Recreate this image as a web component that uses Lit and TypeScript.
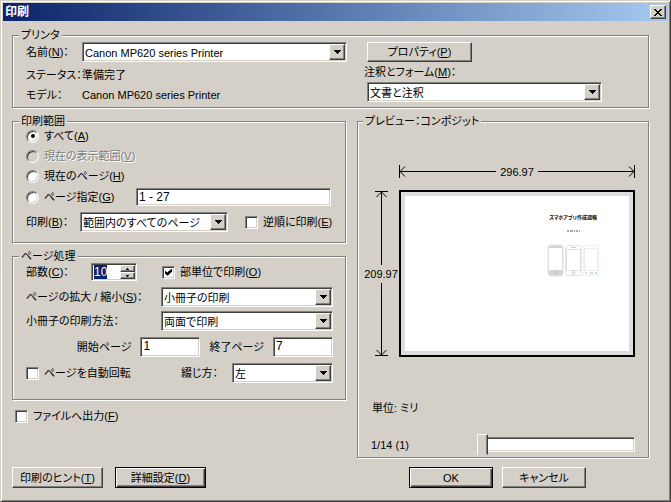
import { LitElement, html, css, svg } from "lit";
import { customElement, property, query } from "lit/decorators.js";

const base = css`
  * { box-sizing: border-box; }
  .sunken {
    background: #fff;
    border: 1px solid;
    border-color: #808080 #fff #fff #808080;
    box-shadow: inset 1px 1px #404040, inset -1px -1px #d4d0c8;
  }
  .raised {
    background: #d4d0c8;
    border: 1px solid;
    border-color: #fff #404040 #404040 #fff;
    box-shadow: inset -1px -1px #808080;
  }
  input, select, button {
    font: inherit;
    font-feature-settings: inherit;
    color: #000;
    margin: 0;
    border-radius: 0;
    outline: none;
  }
`;

@customElement("combo-box")
class ComboBox extends LitElement {
  @property() value = "";
  @property() name = "";

  static styles = [base, css`
    :host { display: grid; height: 20px; min-width: 0; }
    select, .arrow { grid-area: 1 / 1; }
    select { appearance: none; width: 100%; min-width: 0; height: 20px; padding: 1px 18px 0 2px; }
    .arrow {
      justify-self: end;
      align-self: center;
      display: grid;
      place-items: center;
      width: 16px;
      height: 16px;
      margin-right: 2px;
      pointer-events: none;
    }
    svg { display: block; }
  `];

  render() {
    return html`
      <select class="sunken" aria-label=${this.name}><option>${this.value}</option></select>
      <span class="arrow raised">
        <svg width="7" height="4" shape-rendering="crispEdges"><path d="M0 0h7v1h-1v1h-1v1h-1v1h-1v-1h-1v-1h-1v-1h-1z" /></svg>
      </span>`;
  }
}

const chevrons = {
  left: svg`<path d="M0.5 0v13M1 6.5h8M1 6.5l5-5M1 6.5l5 5" />`,
  right: svg`<path d="M8.5 0v13M0 6.5h8M8 6.5l-5-5M8 6.5l-5 5" />`,
  up: svg`<path d="M0 0.5h13M6.5 1v8M6.5 1l-5 5M6.5 1l5 5" />`,
  down: svg`<path d="M0 8.5h13M6.5 0v8M6.5 8l-5-5M6.5 8l5-5" />`,
};

@customElement("app-root")
class AppRoot extends LitElement {
  @query(".copies") copies!: HTMLInputElement;

  static styles = [base, css`
    :host {
      display: block;
      font: 11px/14px "Liberation Sans", "Noto Sans CJK JP", sans-serif;
      font-feature-settings: "palt";
      color: #000;
      white-space: nowrap;
    }
    .window {
      min-height: 100vh;
      background: #d4d0c8;
      border: 1px solid;
      border-color: #d4d0c8 #404040 #404040 #d4d0c8;
      box-shadow: inset 1px 1px #fff, inset -1px -1px #808080;
      padding: 2px;
    }
    .title {
      display: flex;
      align-items: center;
      justify-content: space-between;
      height: 18px;
      padding: 0 2px;
      background: linear-gradient(90deg, #0a246a, #a6caf0);
      color: #fff;
      font-size: 12px;
      font-weight: bold;
    }
    .title h1 { margin: 0; font: inherit; }
    .close { display: grid; place-items: center; width: 16px; height: 14px; padding: 0; }
    .body { display: flex; flex-direction: column; padding: 7px 19px 10px 9px; gap: 6px; }
    fieldset {
      min-width: 0;
      margin: 0;
      padding: 0 12px 5px 13px;
      border: 1px solid #808080;
      box-shadow: 1px 1px #fff, inset 1px 1px #fff;
    }
    legend { height: 14px; margin-left: -7px; padding: 0 2px; background: #d4d0c8; }
    .columns { display: grid; grid-template-columns: minmax(0, 334fr) minmax(0, 292fr); gap: 11px; }
    .stack { display: flex; flex-direction: column; gap: 6px; }
    .row { display: flex; align-items: center; }
    .grow { flex: 1; min-width: 0; }

    .printer { display: grid; grid-template-columns: minmax(0, 321fr) minmax(0, 272fr); gap: 17px; }
    .facts { display: grid; grid-template-columns: 56px minmax(0, 1fr); row-gap: 6px; align-items: center; align-content: start; }
    .forms { display: flex; flex-direction: column; gap: 3px; padding-right: 34px; }
    .forms combo-box, .forms .push { margin-left: 3px; }
    .push { height: 21px; padding: 0; width: 91px; }
    .push.wide { width: 105px; height: 20px; }
    .push.mid { width: 84px; }
    .push.default {
      border-color: #000;
      box-shadow: inset 1px 1px #fff, inset -1px -1px #404040, inset -2px -2px #808080;
    }

    .check { display: flex; align-items: center; gap: 5px; height: 16px; }
    .tick, .dot { appearance: none; display: grid; place-items: center; flex: none; width: 13px; height: 13px; }
    .tick:checked::before {
      content: "";
      width: 7px;
      height: 7px;
      background: #000;
      clip-path: polygon(0 2px, 2px 4px, 7px 0, 7px 3px, 3px 7px, 2px 7px, 0 5px);
    }
    .dot { border-radius: 50%; }
    .dot:checked::before { content: ""; width: 4px; height: 4px; border-radius: 50%; background: #000; }
    .dot:disabled { background: #d4d0c8; }
    .off { color: #808080; text-shadow: 1px 1px #fff; }
    .radios { display: flex; flex-direction: column; gap: 4px; }
    .pages { display: grid; grid-template-columns: 110px minmax(0, 1fr); align-items: center; padding-right: 8px; }
    .field { width: 100%; min-width: 0; height: 18px; padding: 0 2px; font-size: 12px; }
    .field.small { width: 60px; height: 20px; padding-bottom: 3px; }
    .range { padding-bottom: 10px; padding-right: 6px; }
    .range .which { width: 54px; }
    .range .pick { flex: none; width: 148px; margin-right: 17px; }

    .handling { padding-bottom: 16px; }
    .copylabel { width: 65px; }
    .spin { display: flex; width: 46px; height: 18px; padding: 1px; margin-right: 25px; }
    .copies { width: 27px; border: 0; padding: 0 1px; background: none; font-size: 12px; }
    .copies::selection { background: #0a246a; color: #fff; }
    .steps { display: grid; width: 15px; }
    .step { display: grid; place-items: center; padding: 0; height: 7px; }
    .pair { display: grid; grid-template-columns: 135px minmax(0, 1fr); gap: 4px 0; align-items: center; }
    .span { justify-content: end; gap: 9px; }
    .bindlabel { width: 51px; }
    .bind { width: 101px; }
    .tofile { padding: 2px 0 0 3px; }

    .preview { padding: 0 13px 2px 5px; }
    .preview legend { margin-left: 0; }
    .diagram { display: grid; grid-template-columns: 36px minmax(0, 1fr); row-gap: 12px; padding-top: 37px; }
    .dim { display: flex; align-items: center; }
    .dim.across { grid-column: 2; height: 13px; }
    .dim.down { flex-direction: column; padding: 1px 0; }
    .dim svg { flex: none; fill: none; stroke: #000; display: block; }
    .line { flex: 1; background: #000; }
    .across .line { height: 1px; }
    .down .line { width: 1px; }
    .across .size { padding: 0 4px; }
    .down .size { padding: 2px 0; }
    .paper {
      display: grid;
      grid-template-columns: 1fr 1fr;
      aspect-ratio: 237 / 168;
      border: 2px solid #000;
      outline: 4px solid #ddd;
      outline-offset: -6px;
      background: #fff;
    }
    .cover { grid-column: 2; display: flex; flex-direction: column; align-items: center; padding: 21px 4px 0 0; }
    .heading { font: bold 5px/8px "Noto Sans CJK JP", sans-serif; font-feature-settings: "palt"; }
    .dots { margin: 9px 0 12px; }
    .unit { margin: 44px 0 19px 9px; }
    .pager { display: grid; grid-template-columns: 106px minmax(0, 1fr); align-items: center; margin-left: 8px; }
    .slider { appearance: none; width: 100%; height: 21px; background: none; }
    .slider::-webkit-slider-runnable-track {
      height: 15px;
      background: #fff;
      border: 1px solid;
      border-color: #808080 #fff #fff #808080;
      box-shadow: inset 1px 1px #404040, inset -1px -1px #d4d0c8;
    }
    .slider::-webkit-slider-thumb {
      appearance: none;
      width: 11px;
      height: 21px;
      margin: -4px 0 0 -1px;
      background: #d4d0c8;
      border: 1px solid;
      border-color: #fff #404040 #d4d0c8 #fff;
      box-shadow: inset -1px 0 #808080;
    }
    .actions { padding-top: 3px; }
    .actions .row { gap: 12px; }
    .actions .end { gap: 9px; padding-left: 52px; }
  `];

  firstUpdated() {
    this.copies.focus();
    this.copies.select();
  }

  private radio(text: string, key: string, checked = false, disabled = false) {
    return html`<label class="check ${disabled ? "off" : ""}">
      <input class="dot sunken" type="radio" name="range" ?checked=${checked} ?disabled=${disabled} />
      <span>${text}(<u>${key}</u>)</span></label>`;
  }

  render() {
    return html`
      <div class="window">
        <header class="title">
          <h1>印刷</h1>
          <button class="close raised" aria-label="閉じる">
            <svg width="8" height="7" shape-rendering="crispEdges"><path d="M0 0h2v1h1v1h2v-1h1v-1h2v1h-1v1h-1v1h-1v1h1v1h1v1h1v1h-2v-1h-1v-1h-2v1h-1v1h-2v-1h1v-1h1v-1h1v-1h-1v-1h-1v-1h-1z" /></svg>
          </button>
        </header>
        <main class="body">
          <fieldset>
            <legend>プリンタ</legend>
            <div class="printer">
              <div class="facts">
                <span>名前(<u>N</u>)：</span>
                <combo-box name="名前" value="Canon MP620 series Printer"></combo-box>
                <span>ステータス：</span><span>準備完了</span>
                <span>モデル：</span><span>Canon MP620 series Printer</span>
              </div>
              <div class="forms">
                <button class="push wide raised">プロパティ(<u>P</u>)</button>
                <span>注釈とフォーム(<u>M</u>)：</span>
                <combo-box name="注釈とフォーム" value="文書と注釈"></combo-box>
              </div>
            </div>
          </fieldset>

          <div class="columns">
            <div class="stack">
              <fieldset class="range">
                <legend>印刷範囲</legend>
                <div class="stack">
                  <div class="radios">
                    ${this.radio("すべて", "A", true)}
                    ${this.radio("現在の表示範囲", "V", false, true)}
                    ${this.radio("現在のページ", "H")}
                    <div class="pages">
                      ${this.radio("ページ指定", "G")}
                      <input class="field sunken" aria-label="ページ指定" value="1 - 27" />
                    </div>
                  </div>
                  <div class="row">
                    <span class="which">印刷(<u>B</u>)：</span>
                    <combo-box class="pick" name="印刷" value="範囲内のすべてのページ"></combo-box>
                    <label class="check"><input class="tick sunken" type="checkbox" /><span>逆順に印刷(<u>E</u>)</span></label>
                  </div>
                </div>
              </fieldset>

              <fieldset class="handling">
                <legend>ページ処理</legend>
                <div class="stack">
                  <div class="row">
                    <label class="copylabel" for="copies">部数(<u>C</u>)：</label>
                    <div class="spin sunken">
                      <input class="copies" id="copies" value="10" />
                      <div class="steps">
                        <button class="step raised" aria-label="増やす"><svg width="3" height="2" shape-rendering="crispEdges"><path d="M1 0h1v1h1v1h-3v-1h1z" /></svg></button>
                        <button class="step raised" aria-label="減らす"><svg width="3" height="2" shape-rendering="crispEdges"><path d="M0 0h3v1h-1v1h-1v-1h-1z" /></svg></button>
                      </div>
                    </div>
                    <label class="check"><input class="tick sunken" type="checkbox" checked /><span>部単位で印刷(<u>O</u>)</span></label>
                  </div>
                  <div class="pair">
                    <span>ページの拡大 / 縮小(<u>S</u>)：</span>
                    <combo-box name="ページの拡大 / 縮小" value="小冊子の印刷"></combo-box>
                    <span>小冊子の印刷方法：</span>
                    <combo-box name="小冊子の印刷方法" value="両面で印刷"></combo-box>
                  </div>
                  <div class="row span">
                    <label for="first">開始ページ</label>
                    <input class="field small sunken" id="first" value="1" />
                    <label for="last">終了ページ</label>
                    <input class="field small sunken" id="last" value="7" />
                  </div>
                  <div class="row">
                    <label class="check grow"><input class="tick sunken" type="checkbox" /><span>ページを自動回転</span></label>
                    <span class="bindlabel">綴じ方：</span>
                    <combo-box class="bind" name="綴じ方" value="左"></combo-box>
                  </div>
                </div>
              </fieldset>

              <div class="tofile">
                <label class="check"><input class="tick sunken" type="checkbox" /><span>ファイルへ出力(<u>F</u>)</span></label>
              </div>
            </div>

            <fieldset class="preview">
              <legend>プレビュー：コンポジット</legend>
              <div class="diagram">
                <div class="dim across">
                  <svg width="9" height="13">${chevrons.left}</svg><span class="line"></span>
                  <span class="size">296.97</span>
                  <span class="line"></span><svg width="9" height="13">${chevrons.right}</svg>
                </div>
                <div class="dim down">
                  <svg width="13" height="9">${chevrons.up}</svg><span class="line"></span>
                  <span class="size">209.97</span>
                  <span class="line"></span><svg width="13" height="9">${chevrons.down}</svg>
                </div>
                <div class="paper">
                  <div class="cover">
                    <span class="heading">スマホアプリ作成週報</span>
                    <svg class="dots" width="13" height="2"><path d="M0 1h13" stroke="#555" stroke-dasharray="2 1 3 1 1 1" /></svg>
                    <svg width="52" height="33" fill="none">
                      <rect x="1" y="1" width="15" height="31" rx="3" fill="#d3d5d6" stroke="#e4e5e6" />
                      <rect x="2" y="4" width="13" height="22" fill="#fff" />
                      <circle cx="8.5" cy="29" r="1.5" stroke="#c4c6c7" />
                      <rect x="18.5" y="1.5" width="16" height="30" rx="2" stroke="#e6e6e6" />
                      <path d="M24 3.5h5" stroke="#ccc" />
                      <rect x="19.5" y="5.5" width="14" height="21" stroke="#e0e0e0" />
                      <circle cx="26.5" cy="29" r="1.5" stroke="#ccc" />
                      <rect x="36.5" y="1.5" width="15" height="30" stroke="#ebf4f8" />
                      <rect x="37.5" y="4.5" width="13" height="22" stroke="#e2eff5" />
                      <path d="M38 29h2M43 29h3M48 29h2" stroke="#c8dde6" stroke-width="2" />
                    </svg>
                  </div>
                </div>
              </div>
              <div class="unit">単位: ミリ</div>
              <div class="pager">
                <label for="sheet">1/14 (1)</label>
                <input class="slider" id="sheet" type="range" min="1" max="14" value="1" />
              </div>
            </fieldset>
          </div>

          <div class="columns actions">
            <div class="row">
              <button class="push raised">印刷のヒント(<u>T</u>)</button>
              <button class="push raised default">詳細設定(<u>D</u>)</button>
            </div>
            <div class="row end">
              <button class="push mid raised default">OK</button>
              <button class="push mid raised">キャンセル</button>
            </div>
          </div>
        </main>
      </div>`;
  }
}
